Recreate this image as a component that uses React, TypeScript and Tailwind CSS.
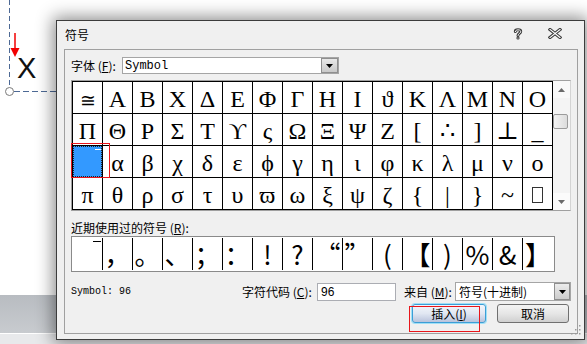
import React from "react";

const rows: string[][] = [
  ["≅", "Α", "Β", "Χ", "Δ", "Ε", "Φ", "Γ", "Η", "Ι", "ϑ", "Κ", "Λ", "Μ", "Ν", "Ο"],
  ["Π", "Θ", "Ρ", "Σ", "Τ", "ϒ", "ς", "Ω", "Ξ", "Ψ", "Ζ", "[", "∴", "]", "⊥", "_"],
  ["`", "α", "β", "χ", "δ", "ε", "ϕ", "γ", "η", "ι", "φ", "κ", "λ", "μ", "ν", "ο"],
  ["π", "θ", "ρ", "σ", "τ", "υ", "ϖ", "ω", "ξ", "ψ", "ζ", "{", "|", "}", "~", "BOX"],
];

const recent = ["TOP", "，", "。", "、", "；", "：", "!", "?", "“", "”", "(", "【", ")", "%", "&", "】"];

function Arrow() {
  return (
    <svg width="7" height="4" viewBox="0 0 7 4">
      <polygon points="0,0 7,0 3.5,4" fill="#000" />
    </svg>
  );
}

function SymbolCell({ ch, r, c }: { ch: string; r: number; c: number }) {
  const selected = r === 2 && c === 0;
  return (
    <div className="relative w-[30px] h-[32px] border-r border-b border-black bg-white flex justify-center pt-[3px] font-['Liberation_Serif','DejaVu_Serif',serif] text-[24px] leading-[28px] text-black">
      {selected ? (
        <>
          <div className="absolute inset-0 bg-[#3399ff] border border-dotted border-[#202020]" />
          <div className="absolute left-[22px] top-[3px] w-[6px] h-[1px] bg-white" />
          <div className="absolute left-[-2px] top-[-3px] w-[39px] h-[35px] border border-[#e8161b] z-10" />
        </>
      ) : ch === "BOX" ? (
        <div className="mt-[6px] w-[11px] h-[16px] border border-[#333]" />
      ) : ch === "≅" ? (
        <span className="text-[19px] font-light mt-[2px]">{ch}</span>
      ) : (
        <span>{ch}</span>
      )}
    </div>
  );
}

export default function App() {
  return (
    <div className="relative w-[587px] h-[344px] overflow-hidden bg-white font-['Noto_Sans_CJK_SC',sans-serif] text-black">
      {/* underlying application */}
      <div className="flex flex-col h-full">
        <div className="h-[295px] bg-white" />
        <div className="h-[38px] bg-gradient-to-b from-[#b8bcc1] to-[#c8cbcf]" />
        <div className="flex-1 bg-[#e8e9eb] border-t border-white" />
      </div>

      {/* document guides */}
      <svg className="absolute left-0 top-0" width="60" height="100" viewBox="0 0 60 100">
        <line x1="9.5" y1="0" x2="9.5" y2="87" stroke="#4d6995" strokeWidth="1" strokeDasharray="5 3" />
        <line x1="14" y1="91.5" x2="60" y2="91.5" stroke="#4d6995" strokeWidth="1" strokeDasharray="6 3" />
        <circle cx="9.5" cy="91.5" r="4" fill="#fff" stroke="#7a7a7a" strokeWidth="1" />
        <line x1="15" y1="33" x2="15" y2="49" stroke="#f20000" strokeWidth="1.5" />
        <polygon points="10.5,48 19.5,48 15,57" fill="#f20000" />
      </svg>
      <div className="absolute left-[17px] top-[54px] font-['Liberation_Sans',sans-serif] text-[29px] leading-[29px] text-[#111]">X</div>

      {/* dialog */}
      <div className="absolute left-[56px] top-[20px] w-[529px] h-[320px] border border-[#3c3c3c] bg-[#f0f0f0] shadow-[0_0_16px_3px_rgba(0,0,0,0.45)] flex flex-col">
        <div className="h-[28px] flex items-center pl-[8px] pr-[22px]">
          <span className="text-[12px] leading-none mt-[-1px]">符号</span>
          <div className="flex-1" />
          <svg width="10" height="12" viewBox="0 0 10 12" className="mt-[-3px]">
            <path d="M2.3 3.6 C2.3 1.2 7.7 1.2 7.7 3.6 C7.7 5.6 5 5.4 5 7.4" fill="none" stroke="#3a3a3a" strokeWidth="3" strokeLinecap="round" />
            <circle cx="5" cy="10" r="1.6" fill="#3a3a3a" />
            <path d="M2.3 3.6 C2.3 1.2 7.7 1.2 7.7 3.6 C7.7 5.6 5 5.4 5 7.4" fill="none" stroke="#fff" strokeWidth="1" strokeLinecap="round" />
            <circle cx="5" cy="10" r="0.6" fill="#fff" />
          </svg>
          <svg width="14" height="11" viewBox="0 0 14 11" className="ml-[25px] mt-[-3px]">
            <path d="M2 1.5 L12 9.5 M12 1.5 L2 9.5" stroke="#3a3a3a" strokeWidth="3.2" strokeLinecap="square" />
            <path d="M2 1.5 L12 9.5 M12 1.5 L2 9.5" stroke="#fff" strokeWidth="1.1" strokeLinecap="square" />
          </svg>
        </div>

        <div className="ml-[7px] mr-[6px] mb-[5px] flex-1 border border-[#a0a0a0] flex flex-col pl-[6px] pt-[7px] text-[12px]">
          {/* font row */}
          <div className="flex items-center h-[17px]">
            <span className="w-[51px] leading-none">
              字体 (<span className="underline">F</span>):
            </span>
            <div className="w-[217px] h-[17px] border border-[#a5a5a5] bg-white flex items-center">
              <span className="flex-1 pl-[2px] font-['Liberation_Mono',monospace] text-[12px] leading-none">Symbol</span>
              <div className="w-[17px] h-[15px] border border-[#8f8f8f] bg-gradient-to-b from-[#e8e8e8] to-[#c9c9c9] flex items-center justify-center">
                <Arrow />
              </div>
            </div>
          </div>

          {/* symbol grid */}
          <div className="mt-[6px] flex w-[500px] border border-[#a0a0a0] border-r-[#d4d4d4]">
            <div className="grid grid-cols-[repeat(16,30px)] border-l border-t border-black">
              {rows.map((row, r) =>
                row.map((ch, c) => <SymbolCell key={`${r}-${c}`} ch={ch} r={r} c={c} />)
              )}
            </div>
            <div className="w-[17px] flex flex-col bg-[#f4f4f4]">
              <div className="h-[17px] flex items-center justify-center bg-[#f9f9f9]">
                <svg width="7" height="4" viewBox="0 0 7 4">
                  <polygon points="0,4 7,4 3.5,0" fill="#6a6a6a" />
                </svg>
              </div>
              <div className="flex-1">
                <div className="mt-[16px] w-[15px] h-[15px] rounded-[2px] border border-[#9b9b9b] bg-gradient-to-r from-[#f4f4f4] to-[#dcdcdc]" />
              </div>
              <div className="h-[17px] flex items-center justify-center bg-[#fbfbfb]">
                <svg width="7" height="4" viewBox="0 0 7 4">
                  <polygon points="0,0 7,0 3.5,4" fill="#6a6a6a" />
                </svg>
              </div>
            </div>
          </div>

          {/* recent */}
          <div className="mt-[9px] h-[16px] leading-[16px]">
            近期使用过的符号 (<span className="underline">R</span>):
          </div>
          <div className="w-[484px] h-[36px] border border-[#8a8a8a] bg-white py-[1px] flex">
            {recent.map((ch, i) => (
              <div
                key={i}
                className={`${i === 0 ? "w-[31px]" : "w-[30px]"} ${i === 15 ? "" : "border-r border-black"} h-[32px] relative flex items-center justify-center font-['Noto_Sans_CJK_SC',sans-serif] text-[26px] leading-none text-black`}
              >
                {ch === "TOP" ? (
                  <div className="absolute right-[1px] top-[3px] w-[8px] h-[1px] bg-black" />
                ) : (
                  <span>{ch}</span>
                )}
              </div>
            ))}
          </div>

          {/* info row */}
          <div className="mt-[10px] flex items-center h-[19px]">
            <span className="w-[171px] font-['Liberation_Mono',monospace] text-[10px] leading-none">Symbol: 96</span>
            <span className="w-[75px] leading-none">
              字符代码 (<span className="underline">C</span>):
            </span>
            <div className="w-[79px] h-[18px] border border-[#abadb3] bg-white flex items-center pl-[3px] font-['Liberation_Sans',sans-serif] text-[12px] leading-none">
              96
            </div>
            <span className="ml-[8px] w-[51px] leading-none">
              来自 (<span className="underline">M</span>):
            </span>
            <div className="w-[116px] h-[19px] border border-[#a5a5a5] bg-white flex items-center">
              <span className="flex-1 pl-[3px] leading-none">符号(十进制)</span>
              <div className="w-[16px] h-[17px] border border-[#8f8f8f] bg-gradient-to-b from-[#ececec] to-[#cdcdcd] flex items-center justify-center">
                <Arrow />
              </div>
            </div>
          </div>

          {/* buttons */}
          <div className="mt-[3px] flex pl-[341px] gap-[11px]">
            <div className="relative">
              <div className="w-[74px] h-[19px] rounded-[3px] border border-[#3c9ed6] shadow-[0_0_0_1px_#9fe0f7] bg-gradient-to-b from-[#f3f6fb] via-[#e1e7f2] to-[#b9c3dc] flex items-center justify-center leading-none">
                插入(<span className="underline">I</span>)
              </div>
              <div className="absolute left-[-3px] top-[2px] w-[71px] h-[26px] border border-[#e8161b]" />
            </div>
            <div className="w-[72px] h-[19px] rounded-[3px] border border-[#707070] bg-gradient-to-b from-[#f4f4f4] via-[#e6e6e6] to-[#d0d0d0] flex items-center justify-center leading-none">
              取消
            </div>
          </div>
        </div>

        {/* size grip */}
        <svg className="absolute right-[3px] bottom-[4px]" width="12" height="12" viewBox="0 0 12 12">
          {[
            [10, 2],
            [10, 6],
            [6, 6],
            [10, 10],
            [6, 10],
            [2, 10],
          ].map(([x, y], i) => (
            <rect key={i} x={x} y={y} width="1.5" height="1.5" fill="#9a9a9a" />
          ))}
        </svg>
      </div>
    </div>
  );
}
